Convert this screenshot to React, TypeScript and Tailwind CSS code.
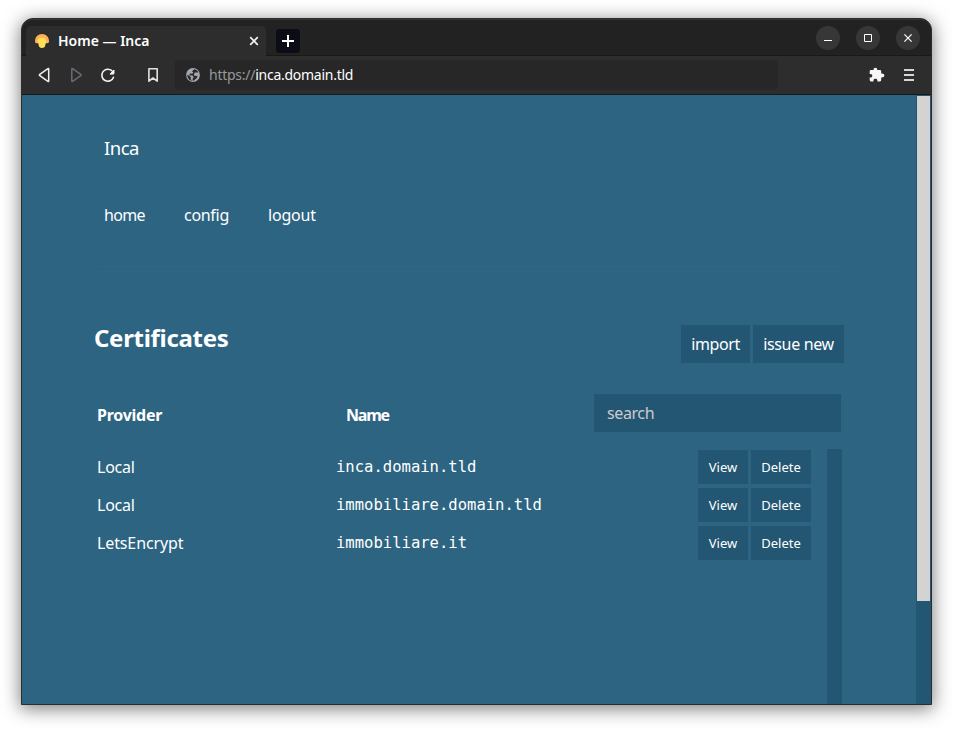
import type { ReactNode } from "react";

const certificates = [
  { provider: "Local", name: "inca.domain.tld", tracking: "tracking-[-0.25px]" },
  { provider: "Local", name: "immobiliare.domain.tld", tracking: "tracking-[-0.25px]" },
  { provider: "LetsEncrypt", name: "immobiliare.it", tracking: "tracking-[-0.12px]" },
];

function WindowButton({ children }: { children: ReactNode }) {
  return (
    <button className="flex size-6 items-center justify-center rounded-full bg-[#373737]">
      {children}
    </button>
  );
}

function TitleBar() {
  return (
    <div className="flex h-[37px] items-end rounded-t-[11px] border-b border-[#181818] bg-[#222222] pl-1 shadow-[inset_0_1px_0_#343434]">
      <div className="-mb-px flex h-[30px] w-[240px] items-center rounded-t-[5px] bg-[#2d2d2d] pl-[9px] pr-[7px]">
        <svg width="14" height="14" viewBox="0 0 14 14">
          <path d="M0 7.200C0 3 3 0 7 0s7 3 7 7.200c0 1.200-.5 2-1.500 2h-11C.5 9.200 0 8.400 0 7.200z" fill="#ffb057" />
          <path d="M2.600 7C2.600 5 4.400 3.800 7 3.800S11.400 5 11.400 7c0 1.300-.2 2-.7 2.600-.4.500-.3 1-.4 1.600C10.100 13 9 14 7 14s-3.100-1-3.300-2.800c-.1-.6 0-1.100-.4-1.600-.5-.6-.7-1.300-.7-2.600z" fill="#ffe056" />
        </svg>
        <span className="ml-[9px] flex-1 whitespace-nowrap text-[14px] font-semibold leading-[30px]">
          Home — Inca
        </span>
        <svg width="10" height="10" viewBox="0 0 10 10" stroke="#f2f2f2" strokeWidth="1.700">
          <path d="M1.200 1.200l7.600 7.600M8.800 1.200L1.200 8.800" />
        </svg>
      </div>
      <button className="mb-[2px] ml-[10px] flex size-6 items-center justify-center rounded-[4px] bg-[#0c0c17]">
        <svg width="12" height="12" viewBox="0 0 12 12" stroke="#fff" strokeWidth="2">
          <path d="M6 0v12M0 6h12" />
        </svg>
      </button>
      <div className="mb-[5px] ml-auto mr-[11px] flex gap-4">
        <WindowButton>
          <svg width="8" height="8" viewBox="0 0 8 8">
            <path d="M0 6h8v1H0z" fill="#fff" />
          </svg>
        </WindowButton>
        <WindowButton>
          <svg width="8" height="8" viewBox="0 0 8 8" fill="none" stroke="#fff">
            <path d="M.5.5h7v7h-7z" />
          </svg>
        </WindowButton>
        <WindowButton>
          <svg width="8" height="8" viewBox="0 0 8 8" stroke="#fff" strokeWidth="1.200">
            <path d="M.4.4l7.200 7.200M7.600.4L.4 7.600" />
          </svg>
        </WindowButton>
      </div>
    </div>
  );
}

function ToolBar() {
  return (
    <div className="flex h-[39px] items-center border-b border-[#191919] bg-[#2d2d2d] pl-4 pr-[17px]">
      <svg width="13" height="16" viewBox="0 0 13 16" fill="none" stroke="#f1f1f1" strokeWidth="1.500" strokeLinejoin="round">
        <path d="M10.700 2v12q0 .9-.8.300L1.800 8.700q-.8-.7 0-1.400L9.900 1.700q.8-.6.8.3z" />
      </svg>
      <svg className="ml-[19px]" width="13" height="16" viewBox="0 0 13 16" fill="none" stroke="#6b6b73" strokeWidth="1.500" strokeLinejoin="round">
        <path d="M1.800 2v12q0 .9.8.300l8.100-5.600q.8-.7 0-1.400L2.600 1.700q-.8-.6-.8.3z" />
      </svg>
      <svg className="ml-[17px]" width="15" height="16" viewBox="0 0 15 16">
        <path d="M13.500 10.200A6 6 0 1 1 11.800 3.700" fill="none" stroke="#f4f4f4" strokeWidth="1.600" strokeLinecap="round" />
        <path d="M14 3v3.300q0 .8-.8.800H10z" fill="#f4f4f4" stroke="#f4f4f4" strokeLinejoin="round" />
      </svg>
      <svg className="ml-[32px]" width="12" height="16" viewBox="0 0 12 16" fill="none" stroke="#e2e2e2" strokeWidth="1.600" strokeLinejoin="round">
        <path d="M1.900 1.800h8.300v12.400L6 11l-4.100 3.200z" />
      </svg>
      <div className="ml-4 flex h-[30px] w-[603px] items-center rounded-[4px] bg-[#272727] pl-[11px]">
        <svg width="14" height="14" viewBox="0 0 14 14">
          <circle cx="7" cy="7" r="6.900" fill="#a3a7ae" />
          <path d="M8.300 1.300 6 3.200l1.300 1.200-1 1.300-2.300-.2-.8 1.700 3.400.4 1.200 1.800-1.200 1.200.2 2.100-1.500.1C2.800 12 1.200 9.800 1.300 6.800L3 7.500l2 1.800-.5 1.400 1.300 2 1.600.1 3.200-2.600 1-1.900-1.300-.6-1.800.2-.6-2 1-1.300 3.400-.1C12.200 3.200 10.500 1.500 8.300 1.300z" fill="#292929" />
        </svg>
        <span className="ml-[9px] whitespace-nowrap text-[14px] leading-[30px] tracking-[-0.26px] text-white">
          <span className="text-[#96989b]">https://</span>inca.domain.tld
        </span>
      </div>
      <svg className="ml-auto" width="16" height="16" viewBox="0 0 16 16" fill="#f7f7f7">
        <path d="M6.400.7c1.200 0 1.800.8 1.800 1.700V3h2.800q1.200 0 1.200 1.200v2.400h.6c1.500 0 2.500.7 2.500 1.900s-1 1.900-2.500 1.900h-.6v2.700q0 1.300-1.300 1.300H8.400v-.9C8.400 12.300 7.600 11.700 6.400 11.700s-1.900.6-1.900 1.800v.9H2q-1.300 0-1.300-1.300v-2.500h.8c1.200 0 1.800-.7 1.800-1.800S2.700 7 1.500 7H.7V4.300Q.7 3 2 3h2.600v-.6c0-.9.600-1.700 1.800-1.700z" />
      </svg>
      <svg className="ml-[19px]" width="10" height="12" viewBox="0 0 10 12" fill="#d5d7d6">
        <path d="M0 0h10v2H0zM0 5h10v2H0zM0 10h10v2H0z" />
      </svg>
    </div>
  );
}

function SmallButton({ children, width }: { children: ReactNode; width: string }) {
  return (
    <button className={`${width} h-[34px] bg-[#235672] text-center text-[13px] tracking-[0.03px]`}>{children}</button>
  );
}

function Page() {
  return (
    <div className="flex h-[609px] bg-[#2d6482]">
      <main className="w-[894px] overflow-hidden pl-[72px]">
        <div className="ml-[10px] mt-[38px] h-[30px] text-[18.500px] leading-[30px] tracking-[-0.5px]">Inca</div>
        <nav className="ml-[10px] mt-[37px] flex h-[30px] text-[16px] leading-[30px]">
          <a className="w-[80px] tracking-[-0.7px]">home</a>
          <a className="w-[84px] tracking-[-0.3px]">config</a>
          <a className="tracking-[-0.2px]">logout</a>
        </nav>
        <hr className="ml-1 mt-[36px] w-[742px] border-t border-[#2f6785]" />
        <div className="mt-[58px] flex h-[38px] w-[750px]">
          <h1 className="-mt-[6px] flex-1 text-[24px] font-bold leading-[38px] tracking-[-0.3px]">Certificates</h1>
          <button className="w-[69px] bg-[#235672] text-[16px] tracking-[-0.4px]">import</button>
          <button className="ml-[3px] w-[91px] bg-[#235672] text-[16px] tracking-[-0.35px]">issue new</button>
        </div>
        <div className="ml-[3px] mt-[31px] flex h-[38px] w-[744px] text-[16px] leading-[42px]">
          <div className="w-[249px] font-bold tracking-[-0.25px]">Provider</div>
          <div className="w-[248px] font-bold tracking-[-1.2px]">Name</div>
          <div className="h-[38px] flex-1 bg-[#235672] pl-[13px] leading-[38px] tracking-[-0.4px] text-[#cbcbcb]">search</div>
        </div>
        <div className="mt-[17px] flex h-[255px] w-[748px]">
          <div className="flex flex-1 flex-col gap-1 pl-[3px] pt-px">
            {certificates.map((c) => (
              <div key={c.name} className="flex h-[34px] leading-[34px]">
                <div className={`w-[239px] text-[16px] ${c.tracking}`}>{c.provider}</div>
                <div className="flex-1 font-['DejaVu_Sans_Mono',monospace] text-[15.550px] leading-[35px]">{c.name}</div>
                <div className="mr-4 flex gap-[3px]">
                  <SmallButton width="w-[50px]">View</SmallButton>
                  <SmallButton width="w-[60px]">Delete</SmallButton>
                </div>
              </div>
            ))}
          </div>
          <div className="w-[15px] bg-[#235672]" />
        </div>
      </main>
      <div className="w-[15px] bg-[#235672] px-px pt-px">
        <div className="h-[505px] bg-[#d3d3d3]" />
      </div>
    </div>
  );
}

export default function App() {
  return (
    <div className="h-[729px] w-[953px] overflow-hidden bg-white pl-[21px] pt-[18px] font-['Noto_Sans',sans-serif] text-white">
      <div className="h-[687px] w-[911px] rounded-t-[12px] border border-[#2b2c2e] bg-[#2b2c2e] shadow-[0_3px_18px_1px_rgba(0,0,0,0.5)]">
        <TitleBar />
        <ToolBar />
        <Page />
      </div>
    </div>
  );
}
